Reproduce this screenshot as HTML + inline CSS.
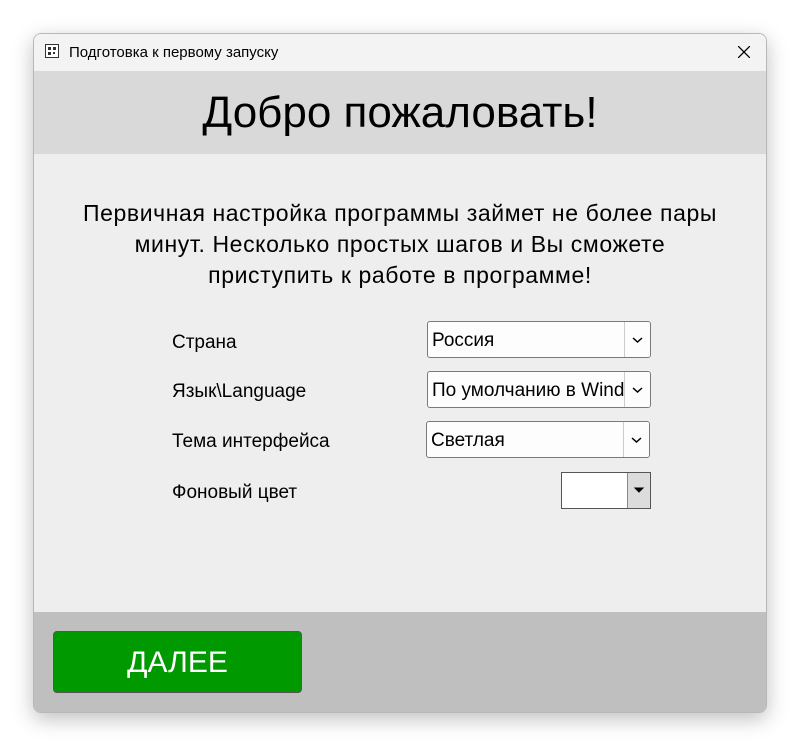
<!DOCTYPE html>
<html><head><meta charset="utf-8"><style>
body{margin:0;width:798px;height:744px;background:#fff;font-family:"Liberation Sans","Noto Sans CJK SC",sans-serif;position:relative;overflow:hidden}
.win{position:absolute;left:33px;top:33px;width:732px;height:678px;border:1px solid #b8b8b8;border-radius:8px;overflow:hidden;box-shadow:0 6px 20px rgba(0,0,0,.25);background:#eee}
.tb{position:absolute;left:0;top:0;width:732px;height:37px;background:#f3f3f3;font-size:15px;color:#000}
.hd{position:absolute;left:0;top:37px;width:732px;height:83px;background:#d9d9d9;text-align:center;font-size:44px;line-height:83px;color:#000}
.p{position:absolute;left:0;top:164px;width:732px;text-align:center;font-size:23px;letter-spacing:0.6px;line-height:31px;color:#000}
.l{position:absolute;left:138px;font-size:19px;color:#000}
.cb{position:absolute;left:393px;width:222px;height:35px;border:1px solid #7a7a7a;border-radius:3px;background:#fdfdfd;font-size:19px;line-height:38px;overflow:hidden}
.cb span{position:absolute;left:4px;white-space:nowrap}
.cb i{position:absolute;right:0;top:0;width:25px;height:35px;border-left:1px solid #ccc;background:#fdfdfd}
.ft{position:absolute;left:0;top:578px;width:732px;height:100px;background:#bfbfbf}
.btn{position:absolute;left:19px;top:19px;width:247px;height:60px;background:#009900;border:1px solid #555;border-radius:4px;color:#fff;font-size:30px;text-align:center;line-height:62px}
</style></head><body>
<div class="win">
<div class="tb">
<svg style="position:absolute;left:11px;top:10px" width="14" height="14"><rect x=".5" y=".5" width="13" height="13" fill="#fff" stroke="#333"/><rect x="3" y="3" width="3" height="3" fill="#333"/><rect x="8" y="3" width="3" height="3" fill="#333"/><rect x="3" y="8" width="3" height="3" fill="#333"/><rect x="8" y="8" width="2" height="2" fill="#333"/></svg>
<span style="position:absolute;left:35px;top:10px">Подготовка к первому запуску</span>
<svg style="position:absolute;left:704px;top:12px" width="12" height="12"><path d="M0 0L12 12M12 0L0 12" stroke="#000" stroke-width="1.3"/></svg>
</div>
<div class="hd">Добро пожаловать!</div>
<div class="p">Первичная настройка программы займет не более пары<br>минут. Несколько простых шагов и Вы сможете<br>приступить к работе в программе!</div>
<div class="l" style="top:298px">Страна</div>
<div class="l" style="top:347px">Язык\Language</div>
<div class="l" style="top:397px">Тема интерфейса</div>
<div class="l" style="top:448px">Фоновый цвет</div>
<div class="cb" style="top:287px"><span>Россия</span><i><svg width="25" height="35"><path d="M8 16l4.5 4 4.5-4" fill="none" stroke="#000" stroke-width="1.5"/></svg></i></div>
<div class="cb" style="top:337px"><span>По умолчанию в Windows</span><i><svg width="25" height="35"><path d="M8 16l4.5 4 4.5-4" fill="none" stroke="#000" stroke-width="1.5"/></svg></i></div>
<div class="cb" style="top:387px;left:392px"><span>Светлая</span><i><svg width="25" height="35"><path d="M8 16l4.5 4 4.5-4" fill="none" stroke="#000" stroke-width="1.5"/></svg></i></div>
<div style="position:absolute;left:527px;top:438px;width:88px;height:35px;border:1px solid #555;background:#fff"><div style="position:absolute;right:0;top:0;width:22px;height:35px;border-left:1px solid #888;background:#dcdcdc"><svg width="22" height="35"><path d="M7 15l4 4 4-4z" fill="#000" stroke="#000"/></svg></div></div>
<div class="ft"><div class="btn">ДАЛЕЕ</div></div>
</div>
</body></html>
